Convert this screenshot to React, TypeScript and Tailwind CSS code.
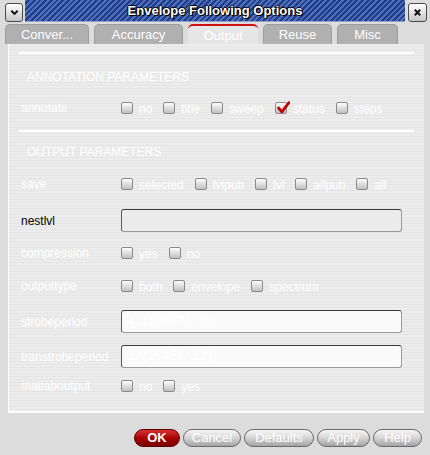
import React from "react";

const Checkbox = ({ checked = false }: { checked?: boolean }) => {
  return (
    <span className="relative flex h-[12px] w-[12px] shrink-0 items-center justify-center rounded-[2px] border border-[#8a8a8a] bg-linear-to-b from-[#fdfdfd] to-[#c0c0c0]">
      {checked && (
        <svg
          viewBox="0 0 12 12"
          className="absolute left-[1px] top-[-2px] h-[13px] w-[13px]"
        >
          <path
            d="M1.5 6.5 L4.5 10 L11 1.5"
            fill="none"
            stroke="#c00000"
            strokeWidth="2.6"
            strokeLinecap="round"
            strokeLinejoin="round"
          />
        </svg>
      )}
    </span>
  );
};

const Options = ({
  items,
}: {
  items: { label: string; checked?: boolean }[];
}) => {
  return (
    <div className="flex items-center gap-[11px]">
      {items.map((item) => (
        <div key={item.label} className="flex items-center gap-[6px]">
          <Checkbox checked={item.checked} />
          <span className="pt-[2px] text-[12px] leading-none text-white">
            {item.label}
          </span>
        </div>
      ))}
    </div>
  );
};

const Row = ({
  label,
  dark = false,
  className,
  children,
}: {
  label: string;
  dark?: boolean;
  className: string;
  children?: React.ReactNode;
}) => {
  return (
    <div className={className}>
      <span
        className={
          dark
            ? "w-[102px] shrink-0 pl-[2px] text-[12px] text-black"
            : "w-[102px] shrink-0 pl-[2px] text-[12px] text-white"
        }
      >
        {label}
      </span>
      {children}
    </div>
  );
};

const Field = ({ value, light = true }: { value?: string; light?: boolean }) => {
  return (
    <div
      className={
        light
          ? "flex h-[23px] w-[281px] items-center rounded-[3px] border border-[#9a9a9a] border-t-[#3a3a3a] border-l-[#5a5a5a] bg-[#fafafa] pl-[5px] font-['Liberation_Mono',monospace] text-[12px] text-white"
          : "flex h-[23px] w-[281px] items-center rounded-[3px] border border-[#9a9a9a] border-t-[#3a3a3a] border-l-[#5a5a5a] bg-[#ebebeb] pl-[5px] font-['Liberation_Mono',monospace] text-[12px] text-white"
      }
    >
      {value}
    </div>
  );
};

const tabs = [
  { name: "Conver...", w: "w-[84px]" },
  { name: "Accuracy", w: "w-[89px]" },
  { name: "Output", w: "w-[70px]", active: true },
  { name: "Reuse", w: "w-[69px]" },
  { name: "Misc", w: "w-[61px]" },
];

const buttons = [
  { name: "Cancel", w: "w-[58px]" },
  { name: "Defaults", w: "w-[70px]" },
  { name: "Apply", w: "w-[53px]" },
  { name: "Help", w: "w-[49px]" },
];

export default function App() {
  return (
    <div className="flex h-[455px] w-[430px] flex-col overflow-hidden bg-[#dcdcdc] font-['Liberation_Sans',Arial,sans-serif]">
      {/* title bar */}
      <div className="flex h-[23px] items-start">
        <button className="ml-[5px] mt-[3px] flex h-[19px] w-[18px] items-center justify-center rounded-[3px] border border-[#4a4a4a] bg-linear-to-b from-white to-[#c6c6c6]">
          <svg viewBox="0 0 10 10" className="h-[9px] w-[9px]">
            <path
              d="M1.5 3 L5 6.5 L8.5 3"
              fill="none"
              stroke="#111"
              strokeWidth="2.2"
            />
          </svg>
        </button>
        <div className="ml-[2px] flex h-[22px] w-[380px] items-center justify-center border-b border-[#8ea0cc] bg-[repeating-linear-gradient(135deg,#4f6fb6_0px,#4f6fb6_2px,#1f3d8c_2px,#1f3d8c_4px)] text-[13px] font-bold text-white [text-shadow:1px_1px_0_#000,-1px_0_0_#000,0_-1px_0_#000,1px_0_0_#000]">
          Envelope Following Options
        </div>
        <button className="ml-[3px] mt-[3px] flex h-[19px] w-[19px] items-center justify-center rounded-[3px] border border-[#4a4a4a] bg-linear-to-b from-white to-[#c6c6c6]">
          <svg viewBox="0 0 10 10" className="h-[9px] w-[9px]">
            <path
              d="M2 2 L8 8 M8 2 L2 8"
              fill="none"
              stroke="#111"
              strokeWidth="2.2"
            />
          </svg>
        </button>
      </div>

      {/* tabs */}
      <div className="mt-[1px] flex h-[20px] gap-[5px] pl-[5px]">
        {tabs.map((tab) => (
          <div
            key={tab.name}
            className={
              tab.active
                ? `${tab.w} flex items-center justify-center rounded-t-[5px] border-t-2 border-[#d01010] bg-[#e6e6e6] pt-[1px] text-[13px] text-white`
                : `${tab.w} flex items-center justify-center rounded-t-[5px] border border-b-0 border-[#9c9c9c] bg-[#b0b0b0] pt-[1px] text-[13px] text-white`
            }
          >
            {tab.name}
          </div>
        ))}
      </div>

      {/* panel */}
      <div className="ml-[8px] flex h-[369px] w-[416px] flex-col border-b-2 border-l border-white bg-[repeating-linear-gradient(180deg,#ececec_0px,#ececec_2px,#e5e5e5_2px,#e5e5e5_3px)] pt-[8px]">
        <div className="mx-[10px] border-t-2 border-white">
          <div className="mt-[13px] flex h-[20px] items-center pl-[8px] text-[12px] text-white">
            ANNOTATION PARAMETERS
          </div>
          <Row label="annotate" className="mt-[11px] flex h-[20px] items-center">
            <Options
              items={[
                { label: "no" },
                { label: "title" },
                { label: "sweep" },
                { label: "status", checked: true },
                { label: "steps" },
              ]}
            />
          </Row>
        </div>

        <div className="mx-[10px] mt-[12px] border-t-2 border-white">
          <div className="mt-[10px] flex h-[20px] items-center pl-[8px] text-[12px] text-white">
            OUTPUT PARAMETERS
          </div>
          <Row label="save" className="mt-[12px] flex h-[20px] items-center">
            <Options
              items={[
                { label: "selected" },
                { label: "lvlpub" },
                { label: "lvl" },
                { label: "allpub" },
                { label: "all" },
              ]}
            />
          </Row>
          <Row label="nestlvl" dark className="mt-[15px] flex h-[23px] items-center">
            <Field light={false} />
          </Row>
          <Row label="compression" className="mt-[11px] flex h-[20px] items-center">
            <Options items={[{ label: "yes" }, { label: "no" }]} />
          </Row>
          <Row label="outputtype" className="mt-[13px] flex h-[20px] items-center">
            <Options
              items={[
                { label: "both" },
                { label: "envelope" },
                { label: "spectrum" },
              ]}
            />
          </Row>
          <Row label="strobeperiod" className="mt-[14px] flex h-[23px] items-center">
            <Field value="4.166667e-09" />
          </Row>
          <Row label="transtrobeperiod" className="mt-[12px] flex h-[23px] items-center">
            <Field value="1/(2.456*12)" />
          </Row>
          <Row label="matlaboutput" className="mt-[8px] flex h-[20px] items-center">
            <Options items={[{ label: "no" }, { label: "yes" }]} />
          </Row>
        </div>
      </div>

      {/* buttons */}
      <div className="mt-[16px] flex h-[18px] gap-[3px] pl-[134px]">
        <button className="flex h-[18px] w-[46px] items-center justify-center rounded-full border border-[#5a0000] bg-linear-to-b from-[#d83030] via-[#a80000] to-[#7a0000] text-[13px] font-bold text-white">
          OK
        </button>
        {buttons.map((b) => (
          <button
            key={b.name}
            className={`${b.w} flex h-[18px] items-center justify-center rounded-full border border-[#6a6a6a] bg-linear-to-b from-[#f8f8f8] via-[#d4d4d4] to-[#a4a4a4] text-[13px] text-white`}
          >
            {b.name}
          </button>
        ))}
      </div>
    </div>
  );
}
